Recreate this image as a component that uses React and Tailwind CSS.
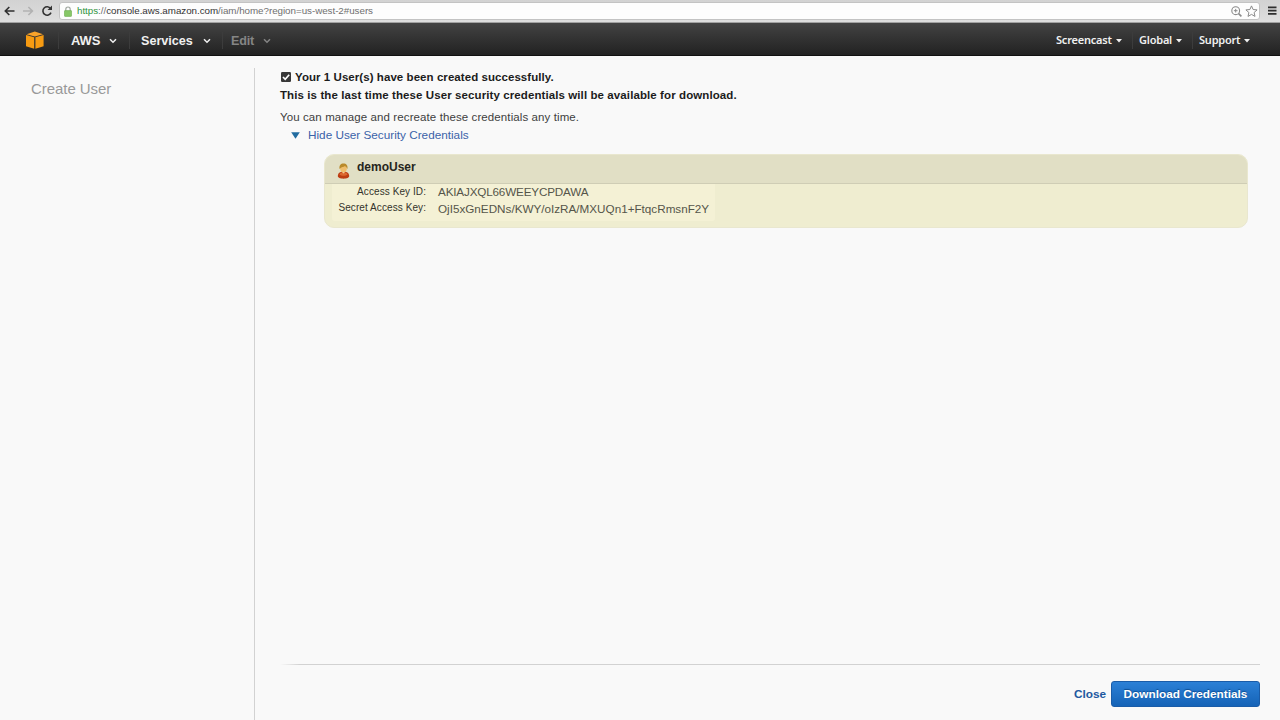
import React from "react";

const Chevron = ({ className }) => (
  <svg viewBox="0 0 8 6" className={`h-[6px] w-[8px] ${className}`} fill="none" stroke="currentColor" strokeWidth="1.5">
    <path d="M1 1.2 4 4.2 7 1.2" />
  </svg>
);

const Caret = () => (
  <svg viewBox="0 0 6 4" className="ml-[4px] h-[4px] w-[6px]" fill="currentColor">
    <path d="M0 0h6L3 3.6z" />
  </svg>
);

const Divider = ({ className }) => (
  <div className={`h-[17px] w-px shrink-0 bg-[#3c3c3c] ${className}`} />
);

function BrowserBar() {
  return (
    <div className="flex h-[23px] shrink-0 items-start border-b border-[#a2a2a2] bg-linear-to-b from-[#d2d2d2] to-[#dedede]">
      <svg viewBox="0 0 12 10" className="ml-[4px] mt-[6px] h-[10px] w-[12px] shrink-0" fill="none" stroke="#2f2f2f" strokeWidth="1.6">
        <path d="M10.5 5H1.5M5.3 1 1.3 5l4 4" />
      </svg>
      <svg viewBox="0 0 12 10" className="ml-[6px] mt-[6px] h-[10px] w-[12px] shrink-0" fill="none" stroke="#b2b2b2" strokeWidth="1.6">
        <path d="M1 5h9M6.4 1l4 4-4 4" />
      </svg>
      <svg viewBox="0 0 12 12" className="ml-[7px] mt-[5px] h-[12px] w-[12px] shrink-0" fill="none" stroke="#333" strokeWidth="1.6">
        <path d="M9.6 3.6A4.2 4.2 0 1 0 10 7.6" />
        <path d="M11 .6v4.5H6.5z" fill="#333" stroke="none" />
      </svg>
      <div className="ml-[6px] mt-[2px] flex h-[18px] w-[1201px] shrink-0 items-center rounded-[3px] border border-[#c3c3c3] bg-[#fdfdfd]">
        <svg viewBox="0 0 8 11" className="ml-[4px] h-[11px] w-[8px]">
          <path d="M1.8 5V3.2a2.2 2.2 0 0 1 4.4 0V5" fill="none" stroke="#a0a8a0" strokeWidth="1.2" />
          <rect x="0.3" y="4.6" width="7.4" height="5.8" rx="0.8" fill="#86c766" stroke="#6bab50" strokeWidth="0.6" />
        </svg>
        <div className="ml-[5px] text-[9.8px] leading-[16px] tracking-[-0.035px] whitespace-nowrap text-[#6f6f6f]">
          <span className="text-[#2f9440]">https</span>://<span className="text-[#333]">console.aws.amazon.com</span>/iam/home?region=us-west-2#users
        </div>
        <svg viewBox="0 0 11 11" className="ml-auto h-[11px] w-[11px]" fill="none" stroke="#8a8a8a">
          <circle cx="4.7" cy="4.7" r="3.9" strokeWidth="1.1" />
          <path d="M2.9 4.7h3.6M4.7 2.9v3.6" strokeWidth="1" />
          <path d="m7.6 7.6 2.8 2.8" strokeWidth="1.6" />
        </svg>
        <svg viewBox="0 0 13 12" className="mr-px ml-[3px] h-[12px] w-[13px]" fill="none" stroke="#8a8a8a" strokeWidth="1">
          <path d="m6.5 .9 1.6 3.6 4 .4-3 2.6.9 3.9-3.5-2-3.5 2 .9-3.9-3-2.6 4-.4z" />
        </svg>
      </div>
      <svg viewBox="0 0 9 9" className="ml-[8px] mt-[6px] h-[9px] w-[9px] shrink-0" fill="#2f2f2f">
        <path d="M0 .4h8.5v1.8H0zM0 3.7h8.5v1.8H0zM0 7h8.5v1.8H0z" />
      </svg>
    </div>
  );
}

function NavBar() {
  return (
    <div className="flex h-[33px] shrink-0 items-center border-b border-[#111] bg-linear-to-b from-[#434343] to-[#222] pt-[3px] text-[13px] font-bold text-[#f0f0f0]">
      <svg viewBox="0 0 18 18" className="mb-[2px] ml-[26px] h-[18px] w-[18px] shrink-0">
        <path d="M.6 3.2 8.800.400 17 3.200 8.800 5.400z" fill="#f9a32a" />
        <path d="M0 4.100 8.200 6.300V17.800L0 15.200z" fill="#f79b12" />
        <path d="M17.600 4.100 9.400 6.300V17.800L17.600 15.200z" fill="#f79b12" />
      </svg>
      <Divider className="ml-[14px]" />
      <span className="ml-[12px] w-[30px] tracking-[-0.1px] whitespace-nowrap">AWS</span>
      <Chevron className="ml-[8px] mt-px" />
      <Divider className="ml-[12px]" />
      <span className="mt-px ml-[11px] w-[52px] text-[12.6px] whitespace-nowrap">Services</span>
      <Chevron className="ml-[10px] mt-px" />
      <Divider className="ml-[11px]" />
      <span className="mt-px ml-[8px] w-[24px] text-[12.6px] tracking-[-0.2px] whitespace-nowrap text-[#858585]">Edit</span>
      <Chevron className="ml-[8px] mt-px text-[#858585]" />
      <div className="ml-auto flex items-center pr-[30px] font-['Noto_Sans','Open_Sans',sans-serif] text-[11px] font-semibold tracking-[-0.22px]">
        <span className="w-[56px]">Screencast</span>
        <Caret />
        <Divider className="mr-[6px] ml-[10px]" />
        <span className="w-[33px]">Global</span>
        <Caret />
        <Divider className="mr-[6px] ml-[10px]" />
        <span className="w-[41px]">Support</span>
        <Caret />
      </div>
    </div>
  );
}

function UserIcon() {
  return (
    <svg viewBox="0 0 13 16" className="h-[16px] w-[13px] shrink-0">
      <path d="M.8 12.8C1 10 3.400 8.600 6.500 8.600s5.500 1.400 5.700 4.200c.1 2-2.400 2.900-5.700 2.900S.7 14.800.8 12.800z" fill="#bd3d12" />
      <path d="M2.400 11.400c.7-1.400 2.300-2.200 4.100-2.200s3.400.8 4.100 2.200c-1.800 1.700-6.400 1.700-8.200 0z" fill="#dc6830" />
      <path d="M4.600 8.600h3.800L6.500 10.600z" fill="#f3d9b0" />
      <ellipse cx="6.500" cy="5.600" rx="3.300" ry="3.800" fill="#efbd6c" />
      <path d="M2.600 6C1.800 2.300 3.800.400 6.500.400s4.700 1.900 3.900 5.600C9.500 4.500 8.600 3.500 8 3.100 6.700 4.200 4.200 4 2.600 6z" fill="#b98a2c" />
    </svg>
  );
}

function CredentialCard() {
  return (
    <div className="ml-[44px] mt-[10px] flex h-[74px] w-[924px] flex-col overflow-hidden rounded-[10px] border border-[#e9e7cf] bg-[#efedd0]">
      <div className="flex h-[29px] shrink-0 items-start border-b border-[#cfcdb5] bg-[#e1dfc5]">
        <div className="ml-[12px] mt-[8px]"><UserIcon /></div>
        <div className="ml-[7px] mt-[4px] text-[12px] leading-[16px] font-bold text-[#262620]">demoUser</div>
      </div>
      <div className="ml-[7px] flex h-[37px] w-[383px] rounded-b-[3px] bg-[#f4f1d5]">
        <div className="w-[94px] text-right text-[10px] leading-[16px] tracking-[0.08px] whitespace-nowrap text-[#33332c]">
          <div>Access Key ID:</div>
          <div>Secret Access Key:</div>
        </div>
        <div className="ml-[12px] text-[11.7px] leading-[16px] whitespace-nowrap text-[#55554a]">
          <div className="tracking-[-0.17px]">AKIAJXQL66WEEYCPDAWA</div>
          <div className="mt-px">OjI5xGnEDNs/KWY/oIzRA/MXUQn1+FtqcRmsnF2Y</div>
        </div>
      </div>
    </div>
  );
}

export default function App() {
  return (
    <div className="flex h-[720px] w-[1280px] flex-col overflow-hidden bg-[#f9f9f9] font-['Liberation_Sans',Arial,sans-serif]">
      <BrowserBar />
      <NavBar />
      <div className="flex min-h-0 flex-1">
        <aside className="w-[254px] shrink-0 pt-[23px] pl-[31px]">
          <h1 className="text-[15px] leading-[20px] tracking-[-0.05px] whitespace-nowrap text-[#999]">Create User</h1>
        </aside>
        <div className="mt-[12px] w-px shrink-0 bg-[#d2d2d2]" />
        <main className="flex min-w-0 flex-1 flex-col pl-[25px] pt-[12px] text-[11.5px] leading-[18px] whitespace-nowrap">
          <div className="flex items-center font-bold tracking-[0.06px] text-[#1c1c1c]">
            <svg viewBox="0 0 10 10" className="mr-[4px] ml-[1px] h-[10px] w-[10px]">
              <rect width="10" height="10" rx="1.2" fill="#383838" />
              <path d="m2 5 2.2 2.3L8.2 2.8" fill="none" stroke="#fff" strokeWidth="1.7" />
            </svg>
            <span>Your 1 User(s) have been created successfully.</span>
          </div>
          <div className="font-bold tracking-[0.095px] text-[#1c1c1c]">This is the last time these User security credentials will be available for download.</div>
          <div className="mt-[4px] tracking-[0.1px] text-[#404040]">You can manage and recreate these credentials any time.</div>
          <div className="flex items-center pl-[11px] text-[#3a62a8]">
            <svg viewBox="0 0 9 7" className="mr-[8px] h-[7px] w-[9px]" fill="#226ca0">
              <path d="M.2.3h8.6L4.5 6.7z" />
            </svg>
            <span className="text-[11.75px]">Hide User Security Credentials</span>
          </div>
          <CredentialCard />
          <div className="mt-auto h-px w-[980px] bg-linear-to-r from-transparent via-[#d2d2d2] via-2% to-[#d2d2d2]" />
          <div className="flex h-[55px] items-start justify-end pt-[16px] pr-[20px] font-bold">
            <span className="mt-[4px] mr-[5px] text-[11.8px] text-[#2158a0]">Close</span>
            <button className="h-[26px] w-[149px] rounded-[3px] border border-[#1a5ca8] bg-linear-to-b from-[#2b80d6] to-[#1563b7] text-[11.8px] text-white text-shadow-[0_-1px_1px_#0d4c92]">
              Download Credentials
            </button>
          </div>
        </main>
      </div>
    </div>
  );
}
